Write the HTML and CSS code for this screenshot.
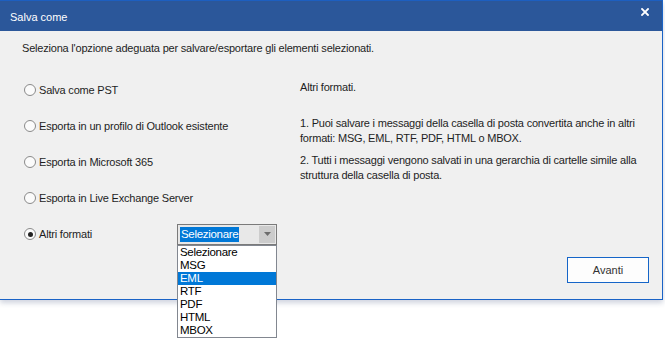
FILE: index.html
```html
<!DOCTYPE html>
<html lang="it">
<head>
    <meta charset="UTF-8">
    <meta name="viewport" content="width=device-width, initial-scale=1.0">
    <title>Salva come</title>
    <link rel="stylesheet" href="styles.css">
</head>
<body>

    <div class="window">
        <div class="titlebar">
            <span class="title">Salva come</span>
            <svg class="close" width="8" height="8" viewBox="0 0 8 8">
                <path d="M1 1 L7 7 M7 1 L1 7" stroke="#fff" stroke-width="1.8" stroke-linecap="square"/>
            </svg>
        </div>

        <div class="content">
            <p class="intro">Seleziona l'opzione adeguata per salvare/esportare gli elementi selezionati.</p>

            <div class="main">
                <div class="options">
                    <div class="option"><span class="radio"></span><span class="label">Salva come PST</span></div>
                    <div class="option"><span class="radio"></span><span class="label">Esporta in un profilo di Outlook esistente</span></div>
                    <div class="option"><span class="radio"></span><span class="label">Esporta in Microsoft 365</span></div>
                    <div class="option"><span class="radio"></span><span class="label">Esporta in Live Exchange Server</span></div>
                    <div class="option select-row">
                        <span class="radio checked"></span><span class="label">Altri formati</span>
                        <div class="combo">
                            <span class="combo-value">Selezionare</span>
                            <span class="combo-arrow">
                                <svg width="7" height="4" viewBox="0 0 7 4"><path d="M0 0 H7 L3.5 4 Z" fill="#6d6d6d"/></svg>
                            </span>
                            <ul class="combo-list">
                                <li>Selezionare</li>
                                <li>MSG</li>
                                <li class="active">EML</li>
                                <li>RTF</li>
                                <li>PDF</li>
                                <li>HTML</li>
                                <li>MBOX</li>
                            </ul>
                        </div>
                    </div>
                </div>

                <div class="info">
                    <p class="info-title">Altri formati.</p>
                    <p class="info-one">1. Puoi salvare i messaggi della casella di posta convertita anche in altri<br>formati: MSG, EML, RTF, PDF, HTML o MBOX.</p>
                    <p class="info-two">2. Tutti i messaggi vengono salvati in una gerarchia di cartelle simile alla<br>struttura della casella di posta.</p>
                </div>
            </div>

            <div class="footer">
                <button class="next">Avanti</button>
            </div>
        </div>
    </div>

</body>
</html>
```
FILE: styles.css
```css
body {
    margin: 0;
    min-height: 339px;
    background: #fff;
    font-family: 'Liberation Sans', Arial, sans-serif;
    font-size: 11px;
    letter-spacing: -0.2px;
    color: #1e1e1e;
}

p {
    margin: 0;
}

.window {
    width: 662px;
    border-right: 1px solid #1a63c6;
    border-bottom: 1px solid #1a63c6;
    box-shadow: 0 3px 5px rgba(40, 60, 110, 0.22);
}

.titlebar {
    height: 31px;
    box-sizing: border-box;
    background-color: #2b579a;
    border-top: 1px solid #1d5fc0;
    display: flex;
    justify-content: space-between;
    align-items: flex-start;
    padding: 0 13px 0 10px;
    color: #fff;
}

.title {
    margin-top: 9px;
    font-size: 11px;
    line-height: 14px;
    letter-spacing: 0;
}

.close {
    margin-top: 7px;
}

.content {
    height: 268px;
    box-sizing: border-box;
    background-color: #f0f0f0;
    padding: 10px 0 0 22px;
}

.intro {
    line-height: 14px;
}

.main {
    display: grid;
    grid-template-columns: 278px 1fr;
    margin-top: 17px;
}

.option {
    height: 36px;
    display: flex;
    align-items: center;
}

.radio {
    width: 10px;
    height: 10px;
    margin-left: 2px;
    border: 1px solid #8a8a8a;
    border-radius: 50%;
    background: #fbfbfb;
    display: flex;
    align-items: center;
    justify-content: center;
}

.radio.checked::after {
    content: '';
    width: 5px;
    height: 5px;
    border-radius: 50%;
    background: #222;
}

.label {
    margin-left: 3px;
    white-space: nowrap;
}

.select-row .label {
    width: 138px;
}

.combo {
    position: relative;
    width: 96px;
    height: 19px;
    border: 1px solid #7a7a7a;
    background: #e8e8e8;
    display: flex;
    align-items: center;
    padding-left: 2px;
}

.combo-value {
    background: #0078d7;
    color: #fff;
    font-size: 11.5px;
    letter-spacing: -0.3px;
    line-height: 15px;
    padding: 0 1px;
}

.combo-arrow {
    margin-left: auto;
    width: 16px;
    height: 17px;
    margin-right: 1px;
    background: #cccccc;
    display: flex;
    align-items: center;
    justify-content: center;
}

.combo-list {
    position: absolute;
    top: 20px;
    left: -1px;
    width: 98px;
    margin: 0;
    padding: 0;
    list-style: none;
    background: #fff;
    border: 1px solid #828790;
    font-size: 11.5px;
    letter-spacing: -0.3px;
    color: #000;
}

.combo-list li {
    height: 13px;
    line-height: 13px;
    padding-left: 2px;
}

.combo-list li.active {
    background: #0078d7;
    color: #fff;
}

.info {
    line-height: 15px;
    white-space: nowrap;
}

.info-title {
    margin-top: 8px;
}

.info-one {
    margin-top: 21px;
}

.info-two {
    margin-top: 7px;
}

.footer {
    display: flex;
    justify-content: flex-end;
    padding-right: 13px;
    margin-top: 5px;
}

.next {
    width: 82px;
    height: 26px;
    background: #fdfdfd;
    border: 1px solid #1565c8;
    font-family: 'Liberation Sans', Arial, sans-serif;
    font-size: 11px;
    color: #333;
    padding: 0;
}
```
